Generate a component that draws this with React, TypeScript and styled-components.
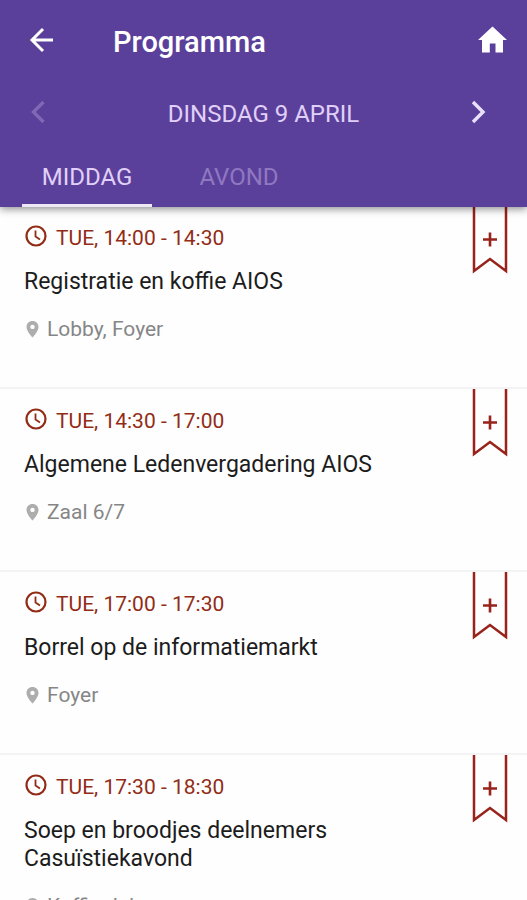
import React from "react";
import styled, { createGlobalStyle } from "styled-components";

const GlobalStyle = createGlobalStyle`
  *, *::before, *::after { box-sizing: border-box; }
  body { margin: 0; background: #fefefe; font-family: Roboto, "Liberation Sans", sans-serif; }
  html, body, #root { height: 100%; }
  button { font: inherit; color: inherit; background: none; border: 0; padding: 0; cursor: pointer; }
  svg { display: block; }
`;

const Screen = styled.div`
  height: 100%;
  display: flex;
  flex-direction: column;
  overflow: hidden;
`;

const Header = styled.header`
  position: relative;
  z-index: 1;
  flex: none;
  background: #5b409b;
  box-shadow: 0 2px 8px rgba(0, 0, 0, 0.45);
`;

const TitleBar = styled.div`
  display: flex;
  align-items: center;
  height: 82px;
  padding: 0 18px 0 24px;
  color: #ffffff;
`;

const IconButton = styled.button<{ $tint?: string }>`
  && {
    flex: none;
    display: grid;
    place-items: center;
    width: 34px;
    height: 34px;
    color: ${(p) => p.$tint ?? "#ffffff"};
  }
`;

const Title = styled.h1`
  flex: 1;
  margin: 0 0 0 55px;
  padding-top: 2px;
  font-size: 29px;
  line-height: 36px;
  font-weight: 500;
`;

const DateBar = styled.div`
  display: flex;
  align-items: center;
  height: 60px;
  padding: 0 32px 0 22px;
`;

const DateLabel = styled.span`
  flex: 1;
  padding: 4px 0 0 10px;
  text-align: center;
  font-size: 24px;
  line-height: 28px;
  color: #e0d0f8;
`;

const Tabs = styled.div`
  display: flex;
  padding: 0 22px;
  gap: 22px;
`;

const Tab = styled.button<{ $active?: boolean }>`
  && {
    height: 65px;
    width: 130px;
    padding-top: 8px;
    font-size: 24px;
    line-height: 28px;
    color: ${(p) => (p.$active ? "#e0d0f8" : "#8f78c0")};
    border-bottom: 3px solid ${(p) => (p.$active ? "#eee8f6" : "transparent")};
  }
`;

const Sessions = styled.ul`
  flex: 1;
  min-height: 0;
  overflow: hidden;
  margin: -1px 0 0;
  padding: 0;
  list-style: none;
`;

const Session = styled.li`
  display: flex;
  justify-content: space-between;
  align-items: flex-start;
  min-height: 183px;
  padding: 0 18px 20px 24px;
  border-bottom: 2px solid #f3f3f3;
`;

const Details = styled.div`
  flex: 1;
  padding-top: 18px;
`;

const Time = styled.div`
  display: flex;
  align-items: center;
  gap: 8px;
  font-size: 21px;
  line-height: 26px;
  color: #922c16;

  svg {
    margin-bottom: 4px;
  }
`;

const Name = styled.h2`
  margin: 16px 0 0;
  max-width: 380px;
  font-size: 23px;
  line-height: 28px;
  font-weight: 400;
  color: #1c1c1c;
`;

const Place = styled.div`
  display: flex;
  align-items: center;
  gap: 6px;
  margin-top: 20px;
  font-size: 21px;
  line-height: 26px;
  color: #868686;
`;

const BackIcon = () => (
  <svg width="34" height="34" viewBox="0 0 34 34" fill="none" stroke="currentColor" strokeWidth="3">
    <path d="M29 16H8M19 5L8 16L19 27" />
  </svg>
);

const HomeIcon = () => (
  <svg width="34" height="34" viewBox="0 0 34 34" fill="currentColor">
    <path d="M17.500 2.500L32 16H28V28.500H20.500V19.500H14.800V28.500H7V16H3Z" />
  </svg>
);

const ChevronIcon = ({ direction }: { direction: "left" | "right" }) => (
  <svg width="34" height="34" viewBox="0 0 34 34" fill="none" stroke="currentColor" strokeWidth="3.400">
    <path d={direction === "left" ? "M21.500 7L11.500 17L21.500 27" : "M12 7L22 17L12 27"} />
  </svg>
);

const ClockIcon = () => (
  <svg width="24" height="24" viewBox="0 0 24 24" fill="none" stroke="currentColor" strokeWidth="2.200">
    <circle cx="12" cy="12" r="9.500" />
    <path strokeWidth="1.800" d="M11.500 6.500V12.500L16 15.500" />
  </svg>
);

const PinIcon = () => (
  <svg width="17" height="18" viewBox="0 0 17 18">
    <path
      fill="#adadad"
      fillRule="evenodd"
      d="M8.500 1C4.900 1 2.500 3.600 2.500 7C2.500 11.500 8.500 17.500 8.500 17.500S14.500 11.500 14.500 7C14.500 3.600 12.100 1 8.500 1ZM8.500 4.700A2.200 2.200 0 1 1 8.500 9.100A2.200 2.200 0 1 1 8.500 4.700Z"
    />
  </svg>
);

const BookmarkIcon = () => (
  <svg width="38" height="68" viewBox="0 0 38 68" fill="none" stroke="#97231a">
    <path strokeWidth="2.500" d="M3 0V65L19 53L35 65V0" />
    <path strokeWidth="2.600" d="M12 33.500H26M19 26.500V40.500" />
  </svg>
);

const BookmarkButton = styled.button`
  flex: none;
`;

const sessions = [
  { time: "TUE, 14:00 - 14:30", name: "Registratie en koffie AIOS", place: "Lobby, Foyer" },
  { time: "TUE, 14:30 - 17:00", name: "Algemene Ledenvergadering AIOS", place: "Zaal 6/7" },
  { time: "TUE, 17:00 - 17:30", name: "Borrel op de informatiemarkt", place: "Foyer" },
  { time: "TUE, 17:30 - 18:30", name: "Soep en broodjes deelnemers Casuïstiekavond", place: "Koffieplein" },
];

export default function App() {
  return (
    <Screen>
      <GlobalStyle />
      <Header>
        <TitleBar>
          <IconButton aria-label="Terug"><BackIcon /></IconButton>
          <Title>Programma</Title>
          <IconButton aria-label="Home"><HomeIcon /></IconButton>
        </TitleBar>
        <DateBar>
          <IconButton $tint="#8068b5" aria-label="Vorige dag"><ChevronIcon direction="left" /></IconButton>
          <DateLabel>DINSDAG 9 APRIL</DateLabel>
          <IconButton $tint="#e9e0fa" aria-label="Volgende dag"><ChevronIcon direction="right" /></IconButton>
        </DateBar>
        <Tabs role="tablist">
          <Tab role="tab" aria-selected="true" $active>MIDDAG</Tab>
          <Tab role="tab" aria-selected="false">AVOND</Tab>
        </Tabs>
      </Header>
      <Sessions>
        {sessions.map((s) => (
          <Session key={s.time}>
            <Details>
              <Time><ClockIcon />{s.time}</Time>
              <Name>{s.name}</Name>
              <Place><PinIcon />{s.place}</Place>
            </Details>
            <BookmarkButton aria-label={`Bewaar ${s.name}`}><BookmarkIcon /></BookmarkButton>
          </Session>
        ))}
      </Sessions>
    </Screen>
  );
}
